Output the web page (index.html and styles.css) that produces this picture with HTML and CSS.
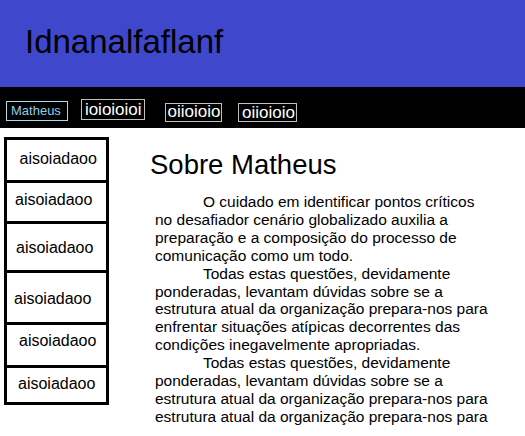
FILE: index.html
```html
<!DOCTYPE html>
<html lang="pt">
<head>
<meta charset="utf-8">
<title>Idnanalfaflanf</title>
<link rel="stylesheet" href="styles.css">
</head>
<body>
<header class="topo">
  <h1 class="titulo">Idnanalfaflanf</h1>
</header>
<nav class="menu">
  <a class="item item-ativo">Matheus</a>
  <a class="item item-2">ioioioioi</a>
  <a class="item item-3">oiioioio</a>
  <a class="item item-4">oiioioio</a>
</nav>
<div class="corpo">
  <aside class="lateral">
    <ul class="lista">
      <li class="l1">aisoiadaoo</li>
      <li class="l2">aisoiadaoo</li>
      <li class="l3">aisoiadaoo</li>
      <li class="l4">aisoiadaoo</li>
      <li class="l5">aisoiadaoo</li>
      <li class="l6">aisoiadaoo</li>
    </ul>
  </aside>
  <main class="conteudo">
    <h2 class="subtitulo">Sobre Matheus</h2>
    <div class="texto">
      <p>O cuidado em identificar pontos críticos no desafiador cenário globalizado auxilia a preparação e a composição do processo de comunicação como um todo.</p>
      <p>Todas estas questões, devidamente ponderadas, levantam dúvidas sobre se a estrutura atual da organização prepara-nos para enfrentar situações atípicas decorrentes das condições inegavelmente apropriadas.</p>
      <p>Todas estas questões, devidamente ponderadas, levantam dúvidas sobre se a estrutura atual da organização prepara-nos para estrutura atual da organização prepara-nos para</p>
    </div>
  </main>
</div>
</body>
</html>
```
FILE: styles.css
```css
html, body {
  margin: 0;
  padding: 0;
  background: #ffffff;
}
body {
  font-family: "Liberation Sans", Arial, sans-serif;
  color: #000;
}

.topo {
  background: #3f48cc;
  height: 87px;
  box-sizing: border-box;
  padding: 22.5px 0 0 25px;
}
.titulo {
  margin: 0;
  font-size: 33px;
  font-weight: normal;
  color: #000;
}

.menu {
  background: #000;
  height: 41px;
  display: flex;
  align-items: flex-start;
}
.item {
  display: block;
  border: 1px solid #c0c0c0;
  color: #ffffff;
  font-size: 17px;
}
.item-ativo {
  margin: 14px 0 0 6px;
  border-color: #a3dcec;
  color: #8ecfe6;
  font-size: 13px;
  line-height: 18px;
  padding: 0 6px 0 4px;
}
.item-2 {
  margin: 12px 0 0 13px;
  line-height: 19.4px;
  padding: 0 2px 0 3px;
}
.item-3 {
  margin: 16px 0 0 20px;
  line-height: 16.7px;
  padding: 0 0 0 2px;
}
.item-4 {
  margin: 16px 0 0 16px;
  line-height: 17px;
  padding: 0 1.5px 0 3.5px;
}

.corpo {
  display: flex;
  align-items: flex-start;
}
.lista {
  list-style: none;
  margin: 9px 0 0 4px;
  padding: 0;
  width: 99px;
  border: 3px solid #000;
}
.lista li {
  font-size: 16px;
  line-height: 18px;
  border-top: 3px solid #000;
}
.lista li.l1 { border-top: 0; padding: 10px 0 0 12.5px; height: 30px; }
.lista li.l2 { padding: 8px 0 0 8px; height: 30px; }
.lista li.l3 { padding: 15px 0 0 9px; height: 31px; }
.lista li.l4 { padding: 17px 0 0 7px; height: 32px; }
.lista li.l5 { padding: 7px 0 0 12px; height: 33px; }
.lista li.l6 { padding: 7px 0 0 11px; height: 27px; }

.conteudo {
  margin-left: 41px;
  padding-top: 21px;
}
.subtitulo {
  margin: 0;
  font-size: 27.5px;
  font-weight: normal;
}
.texto {
  margin-top: 12px;
  padding-left: 5px;
  width: 336px;
}
.texto p {
  margin: 0;
  font-size: 15.5px;
  line-height: 17.9px;
  text-indent: 48px;
}
```
